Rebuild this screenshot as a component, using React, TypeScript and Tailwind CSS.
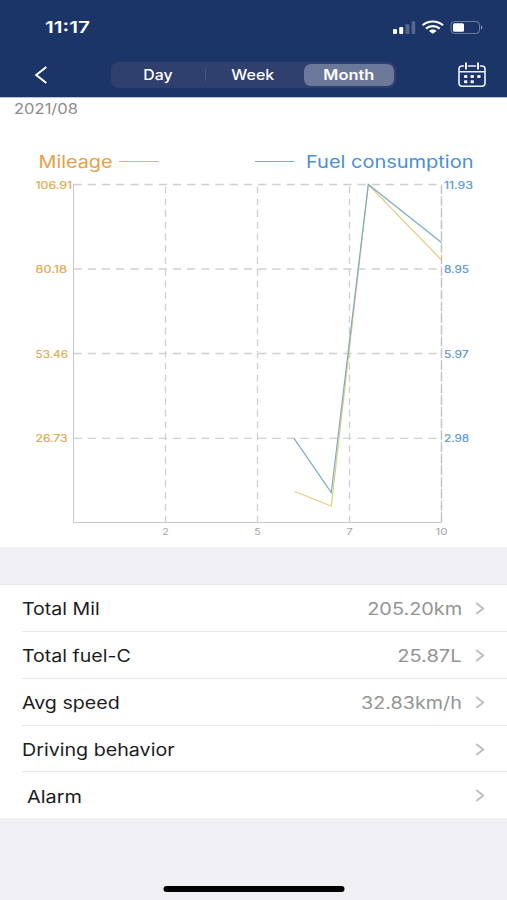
interface StatRow {
  label: string;
  value?: string;
  height: string;
  labelClass: string;
  valueClass?: string;
}

const rows: StatRow[] = [
  { label: 'Total Mil', value: '205.20km', height: 'h-[47px]', labelClass: 'pt-[3px] scale-x-[1.15]', valueClass: 'scale-x-[1.17]' },
  { label: 'Total fuel-C', value: '25.87L', height: 'h-[47px]', labelClass: 'pt-[3px] scale-x-[1.15]', valueClass: 'scale-x-[1.18]' },
  { label: 'Avg speed', value: '32.83km/h', height: 'h-[47px]', labelClass: 'pt-[3px] scale-x-[1.155]', valueClass: 'scale-x-[1.16]' },
  { label: 'Driving behavior', height: 'h-[46px]', labelClass: 'pt-[5px] scale-x-[1.157]' },
  { label: 'Alarm', height: 'h-[46px]', labelClass: 'pt-[5px] scale-x-[1.17] ml-[5px]' },
];

const LEFT = 73.5;
const RIGHT = 441.5;
const TOP = 87.5;
const BOTTOM = 425.5;

const yTicks = [
  { y: 87.5, mileage: '106.91', mileageWidth: 36.5, fuel: '11.93', fuelWidth: 29 },
  { y: 172, mileage: '80.18', mileageWidth: 31.5, fuel: '8.95', fuelWidth: 25 },
  { y: 256.5, mileage: '53.46', mileageWidth: 32.5, fuel: '5.97', fuelWidth: 24.5 },
  { y: 341.3, mileage: '26.73', mileageWidth: 32, fuel: '2.98', fuelWidth: 25 },
];

const xTicks = [
  { x: 165.5, label: '2', width: 6.5 },
  { x: 257.5, label: '5', width: 6.5 },
  { x: 349.5, label: '7', width: 6.5 },
  { x: 441.5, label: '10', width: 12 },
];

function StatusBar() {
  return (
    <div className="flex h-[53px] items-center justify-between pt-[2px] pl-[45px] pr-[23px]">
      <span className="origin-left scale-x-[1.26] text-[16.5px] font-semibold">11:17</span>
      <svg width="92" height="16" viewBox="0 0 92 16" fill="none">
        <g fill="white">
          <rect x="1" y="9" width="4" height="5" rx="1" />
          <rect x="7.2" y="7" width="4" height="7" rx="1" />
          <rect x="13.4" y="4.3" width="4" height="9.7" rx="1" opacity="0.25" />
          <rect x="19.6" y="1.3" width="3.6" height="12.7" rx="1" opacity="0.25" />
        </g>
        <g stroke="white" strokeWidth="2.2">
          <path d="M30.6 5.3C36.2.2 45.4.2 51 5.3" />
          <path d="M34 8.6c3.7-3.4 10-3.4 13.7 0" />
        </g>
        <path d="M40.8 13.8 37 10.9c2.1-1.8 5.5-1.8 7.6 0z" fill="white" />
        <rect x="59" y="1.5" width="28.5" height="12" rx="3.5" stroke="white" strokeOpacity="0.35" />
        <rect x="61" y="3.3" width="11" height="8.5" rx="1.5" fill="white" />
        <path d="M89 5.4c1.8.7 1.8 3.5 0 4.2z" fill="white" fillOpacity="0.5" />
      </svg>
    </div>
  );
}

function CalendarIcon() {
  return (
    <svg width="28" height="26" viewBox="0 0 28 26" fill="none" stroke="#eef3fb" strokeWidth="1.6" strokeLinecap="round">
      <path d="M5.5 4H4a3 3 0 0 0-3 3v14.3a3 3 0 0 0 3 3h20a3 3 0 0 0 3-3V7a3 3 0 0 0-3-3h-1.5M10.5 4h7M1 9.8h26" />
      <path d="M8 1.3v5.4M20 1.3v5.4" strokeWidth="2" />
      <g fill="#eef3fb" stroke="none">
        <rect x="6" y="13" width="3.4" height="3" rx="0.8" />
        <rect x="12.5" y="13" width="3.4" height="3" rx="0.8" />
        <rect x="19.2" y="13" width="3.4" height="3" rx="0.8" />
        <rect x="6" y="18.3" width="3.4" height="3" rx="0.8" />
        <rect x="12.5" y="18.3" width="3.4" height="3" rx="0.8" />
      </g>
    </svg>
  );
}

function NavBar() {
  return (
    <div className="flex h-[43px] items-center pl-[34px] pr-[21px]">
      <svg width="14" height="18" viewBox="0 0 14 18" fill="none" stroke="white" strokeWidth="2">
        <path d="M12.3 1 2.2 9l10.1 8" />
      </svg>
      <div className="ml-[63px] flex h-[26px] w-[285px] items-center rounded-lg bg-[#2f406f] p-[2px] text-[14px] font-medium">
        <div className="flex h-full w-[90px] items-center justify-center">
          <span className="scale-x-[1.13]">Day</span>
        </div>
        <div className="ml-[2px] h-3 w-px bg-[#475782]" />
        <div className="flex h-full w-[98px] items-center justify-center pr-[5px]">
          <span className="scale-x-[1.14]">Week</span>
        </div>
        <div className="flex h-[22px] w-[90px] items-center justify-center rounded-[7px] bg-[#6c7899] font-semibold">
          <span className="scale-x-[1.17]">Month</span>
        </div>
      </div>
      <div className="ml-auto">
        <CalendarIcon />
      </div>
    </div>
  );
}

function TripChart() {
  return (
    <svg className="block" width="507" height="450" viewBox="0 0 507 450" fill="none">
      <text x="14" y="17" fontSize="14" fill="#8c8c8c" textLength="64" lengthAdjust="spacingAndGlyphs">2021/08</text>

      {/* legend */}
      <text x="38.5" y="70.5" fontSize="17" fill="#e5a046" textLength="74" lengthAdjust="spacingAndGlyphs">Mileage</text>
      <path d="M119 64.5h39.5" stroke="#f0b058" strokeWidth="1.2" />
      <path d="M255 64.5h39.5" stroke="#6fb0e4" strokeWidth="1.2" />
      <text x="306" y="70.5" fontSize="17" fill="#4a8fd4" textLength="167.5" lengthAdjust="spacingAndGlyphs">Fuel consumption</text>

      {/* grid */}
      <g stroke="#cfcfcf" strokeWidth="1.3">
        {yTicks.map((t) => (
          <path key={t.y} d={`M${LEFT} ${t.y}H${RIGHT}`} strokeDasharray="8.2 6" />
        ))}
        {xTicks.map((t) => (
          <path key={t.x} d={`M${t.x} ${BOTTOM}V${TOP}`} strokeDasharray="7 4.75" />
        ))}
      </g>
      <path d={`M${LEFT} ${TOP}V${BOTTOM}H${RIGHT}`} stroke="#c8c8c8" />
      <path d={`M${RIGHT} ${TOP}V${BOTTOM}`} stroke="#c2c2c2" strokeWidth="1.3" strokeDasharray="9.5 2.2" />

      {yTicks.map((t) => (
        <g key={t.mileage} fontSize="10">
          <text x="35.5" y={t.y + 4} fill="#dfa748" stroke="#dfa748" strokeWidth="0.15" textLength={t.mileageWidth} lengthAdjust="spacingAndGlyphs">{t.mileage}</text>
          <text x="444" y={t.y + 4} fill="#5595cf" stroke="#5595cf" strokeWidth="0.15" textLength={t.fuelWidth} lengthAdjust="spacingAndGlyphs">{t.fuel}</text>
        </g>
      ))}
      {xTicks.map((t) => (
        <text key={t.label} x={t.x - t.width / 2} y="437.5" fontSize="9.5" fill="#a5a5a5" textLength={t.width} lengthAdjust="spacingAndGlyphs">{t.label}</text>
      ))}

      <path d="M294.5 394.5 331.3 409 368.3 87.5 441.5 163" stroke="#e6cb7c" strokeWidth="1.2" />
      <path d="M294 341.3 331.3 395.5 368.3 87.5 441.5 145.5" stroke="#7aadc4" strokeWidth="1.2" />
    </svg>
  );
}

function StatList() {
  return (
    <div className="border-t border-[#e6e6e9] bg-white">
      {rows.map((row, i) => (
        <div key={row.label} className="pl-[22px]">
          <div className={`${row.height} flex items-center pr-[22px] ${i < rows.length - 1 ? 'border-b border-[#e8e8ea]' : ''}`}>
            <span className={`origin-left text-[17px] text-[#1c1c1c] ${row.labelClass}`}>{row.label}</span>
            <div className="ml-auto flex items-center">
              {row.value && (
                <span className={`mr-[13px] origin-right pt-[3px] text-[17px] text-[#949494] ${row.valueClass}`}>{row.value}</span>
              )}
              <svg className="mt-px" width="10" height="13" viewBox="0 0 10 13" fill="none" stroke="#bcbcbc" strokeWidth="1.8">
                <path d="M1.2 1 8.2 6.5l-7 5.5" />
              </svg>
            </div>
          </div>
        </div>
      ))}
    </div>
  );
}

export default function App() {
  return (
    <div className="flex h-[900px] w-[507px] flex-col overflow-hidden bg-[#efeff4] font-['Inter',sans-serif]">
      <header className="h-[97px] bg-[#1c3568] text-white">
        <StatusBar />
        <NavBar />
      </header>
      <section className="h-[450px] border-t border-[#b9c1d4] bg-white">
        <div className="-mt-px">
          <TripChart />
        </div>
      </section>
      <div className="h-[37px]" />
      <StatList />
      <div className="mx-auto mb-[8px] mt-auto h-[6px] w-[181px] translate-x-[0.5px] rounded-full bg-black" />
    </div>
  );
}
